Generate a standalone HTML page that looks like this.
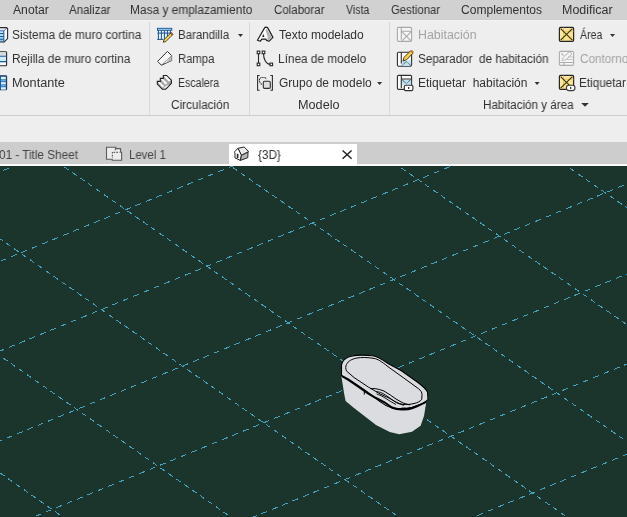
<!DOCTYPE html>
<html><head><meta charset="utf-8">
<style>
*{margin:0;padding:0;box-sizing:border-box}
html,body{width:627px;height:517px;overflow:hidden;background:#eeeeee;font-family:"Liberation Sans",sans-serif;font-size:12px;color:#323232}
.a{position:absolute}
.t{position:absolute;white-space:pre;line-height:14px;height:14px;transform-origin:0 0;will-change:transform}
#tabbar{left:0;top:0;width:627px;height:20px;background:#d1d1d1;border-bottom:1px solid #cdcdcd}
#hl{left:0;top:20px;width:627px;height:1px;background:#f3f3f3}
#panel{left:0;top:21px;width:627px;height:94px;background:#eeeeee}
#pline{left:0;top:115px;width:627px;height:1px;background:#cdcdcd}
.sep{position:absolute;top:22px;width:1px;height:93px;background:#d9d9d9}
#strip{left:0;top:142px;width:627px;height:22px;background:#cdcdcd}
#wline{left:0;top:164px;width:627px;height:2px;background:#fafafa}
#active{left:229px;top:144px;width:128px;height:22px;background:#ffffff}
#view{left:0;top:166px;width:627px;height:351px;background:#1c352c;overflow:hidden}
.g{color:#a3a3a3}
.v{color:#444}
</style></head><body>
<div class="a" id="tabbar"></div>
<div class="a" id="hl"></div>
<div class="a" id="panel"></div>
<div class="a" id="pline"></div>
<div class="sep" style="left:149px"></div>
<div class="sep" style="left:249px"></div>
<div class="sep" style="left:389px"></div>







<div class="a" id="strip"></div>
<div class="a" id="wline"></div>
<div class="a" id="active"></div>

<div id="txt">
<div class="t" style="left:13.3px;top:3px;transform:scaleX(1.014)">Anotar</div>
<div class="t" style="left:69.4px;top:3px;transform:scaleX(0.960)">Analizar</div>
<div class="t" style="left:130.3px;top:3px;transform:scaleX(0.991)">Masa y emplazamiento</div>
<div class="t" style="left:273.8px;top:3px;transform:scaleX(0.958)">Colaborar</div>
<div class="t" style="left:345.6px;top:3px;transform:scaleX(0.881)">Vista</div>
<div class="t" style="left:390.9px;top:3px;transform:scaleX(0.944)">Gestionar</div>
<div class="t" style="left:460.5px;top:3px;transform:scaleX(1.005)">Complementos</div>
<div class="t" style="left:561.9px;top:3px;transform:scaleX(1.038)">Modificar</div>
<div class="t" style="left:12.3px;top:28px;transform:scaleX(0.994)">Sistema de muro cortina</div>
<div class="t" style="left:12.3px;top:52px;transform:scaleX(0.992)">Rejilla de muro cortina</div>
<div class="t" style="left:12.2px;top:76px;transform:scaleX(1.057)">Montante</div>
<div class="t" style="left:177.8px;top:28px;transform:scaleX(0.958)">Barandilla</div>
<div class="t" style="left:177.9px;top:52px;transform:scaleX(0.942)">Rampa</div>
<div class="t" style="left:177.9px;top:76px;transform:scaleX(0.880)">Escalera</div>
<div class="t" style="left:171.3px;top:98px;transform:scaleX(0.983)">Circulación</div>
<div class="t" style="left:278.8px;top:28px;transform:scaleX(0.998)">Texto modelado</div>
<div class="t" style="left:277.8px;top:52px;transform:scaleX(0.986)">Línea de modelo</div>
<div class="t" style="left:278.8px;top:76px;transform:scaleX(0.998)">Grupo de modelo</div>
<div class="t" style="left:298.4px;top:98px;transform:scaleX(1.055)">Modelo</div>
<div class="t g" style="left:417.8px;top:28px;transform:scaleX(1.033)">Habitación</div>
<div class="t" style="left:417.8px;top:52px;transform:scaleX(0.973)">Separador  de habitación</div>
<div class="t" style="left:417.8px;top:76px;transform:scaleX(0.996)">Etiquetar  habitación</div>
<div class="t" style="left:482.9px;top:98px;transform:scaleX(0.970)">Habitación y área</div>
<div class="t" style="left:580.3px;top:28px;transform:scaleX(0.881)">Área</div>
<div class="t g" style="left:580.3px;top:52px;transform:scaleX(0.978)">Contorno</div>
<div class="t" style="left:579.3px;top:76px;transform:scaleX(0.978)">Etiquetar</div>
<div class="t v" style="left:-1.1px;top:148px;transform:scaleX(0.978)">01 - Title Sheet</div>
<div class="t v" style="left:128.7px;top:148px;transform:scaleX(0.954)">Level 1</div>
<div class="t" style="left:257.9px;top:148px;transform:scaleX(0.978)">{3D}</div>
</div>
<!--ICONS-->
<svg class="a" style="left:0;top:0" width="627" height="166" viewBox="0 0 627 166">
<defs>
<linearGradient id="bl" x1="0" y1="0" x2="0" y2="1"><stop offset="0" stop-color="#cfeaff"/><stop offset="1" stop-color="#7cc4f2"/></linearGradient>
<linearGradient id="ye" x1="0" y1="0" x2="1" y2="1"><stop offset="0" stop-color="#fcecb0"/><stop offset="1" stop-color="#f7dc80"/></linearGradient>
</defs>
<!-- Sistema de muro cortina -->
<g>
<path d="M3.8,30.5 L7.5,27.5 L7.5,38.5 L3.8,41.8 Z" fill="#fafcff"/>
<rect x="-1" y="30.5" width="4.8" height="11.5" fill="url(#bl)"/>
<path d="M-1,27.6 L6.5,27.6 L7.6,28.6 L7.6,38.6 L4.2,42 L-1,42" fill="none" stroke="#2b2b2b" stroke-width="1.1"/>
<path d="M6.8,28.2 L3.8,30.8 L-1,30.8" fill="none" stroke="#1f5d9e" stroke-width="0.9"/>
<path d="M3.8,30.8 L3.8,41.6" stroke="#1f5d9e" stroke-width="1.1"/>
<path d="M-1,33.5 H3.8 M-1,36.5 H3.8 M-1,39.3 H3.8" stroke="#1f5d9e" stroke-width="1"/>
</g>
<!-- Rejilla -->
<g>
<rect x="-1" y="51.8" width="7.6" height="14" fill="#f4f8fb" stroke="#2b2b2b" stroke-width="1.1" rx="0.8"/>
<rect x="0" y="52.5" width="6" height="3.6" fill="#d5dde4"/>
<rect x="0" y="56.8" width="6" height="4.5" fill="#c9ecff"/>
<path d="M-1,56.3 H6.2 M-1,61.6 H6.2" stroke="#1f5d9e" stroke-width="1.1"/>
</g>
<!-- Montante -->
<g>
<rect x="-1" y="75.8" width="7.6" height="14" fill="#1a5ea8" stroke="#243a55" stroke-width="1.1" rx="0.8"/>
<rect x="1" y="76.8" width="4.8" height="2.6" fill="#d8f0ff"/>
<rect x="1" y="80.3" width="4.8" height="1" fill="#8fd0f5"/>
<rect x="1" y="82.2" width="4.8" height="2.2" fill="#e3f4ff"/>
<rect x="1" y="85.3" width="4.8" height="1" fill="#8fd0f5"/>
<rect x="1" y="87.2" width="4.8" height="2.4" fill="#e3f4ff"/>
</g>
<!-- Barandilla -->
<g>
<rect x="157.5" y="30" width="14" height="9.3" fill="#e3f4ff"/>
<rect x="157.4" y="28.3" width="14.4" height="2" fill="#9ad6fb" stroke="#1d4f8c" stroke-width="0.9"/>
<path d="M158.4,30.5 V39.3 M161.4,30.5 V39.3 M164.4,30.5 V39.3 M167.4,30.5 V38 M170.4,30.5 V35" stroke="#1d4f8c" stroke-width="1"/>
<path d="M157.5,33.1 H171.5 M157.2,39.4 H163.5" stroke="#1d4f8c" stroke-width="1"/>
<path d="M163.3,42.3 L164,39.6 L170.6,33.2 L172.4,35 L165.9,41.5 Z" fill="#f3cf52" stroke="#2e2410" stroke-width="0.8" stroke-linejoin="round"/>
<path d="M170.6,33.2 L171.4,32.4 L173.2,34.2 L172.4,35 Z" fill="#d27a3c" stroke="#5a3010" stroke-width="0.6"/>
</g>
<!-- Rampa -->
<g>
<path d="M157.6,61.4 L167.4,51.4 L171.6,55.6 L171.6,60.6 L161.4,65.2 Z" fill="#fbfbfb" stroke="#2e2e2e" stroke-width="1"/>
<path d="M171.6,55.6 L171.6,60.6 L165.2,63.4 Z" fill="#b9b9b9"/>
<path d="M161.4,65.2 L171.6,55.6" stroke="#5a5a5a" stroke-width="0.6"/>
</g>
<!-- Escalera -->
<g>
<path d="M157.3,81.4 L160.3,81.4 L160.3,78.4 L163.3,78.4 L163.3,75.5 L166.6,75.5 L171.4,80.3 L171.4,83.3 L165.7,89.1 L162.4,89.1 L157.3,84 Z" fill="#a9a9a9" stroke="#1e1e1e" stroke-width="1.1" stroke-linejoin="miter"/>
<path d="M163.8,76.1 L166.4,76.1 L170.8,80.5 L168.6,81.6 Z" fill="#fdfdfd"/>
<path d="M160.8,79 L163,79 L167.3,83.3 L165.3,84.6 Z" fill="#fdfdfd"/>
<path d="M157.9,82 L160,82 L164.2,86.2 L162.2,87.4 Z" fill="#fdfdfd"/>
<path d="M162.6,88.5 L165.4,88.5 L169,85 L166.8,85.6 Z" fill="#f4f4f4"/>
<path d="M157.8,83.8 L162.3,88.4" stroke="#777" stroke-width="1"/>
</g>
<!-- Texto modelado -->
<g>
<path d="M257.4,40.2 L264.6,27.9 C265.2,26.9 267.1,26.9 267.7,27.9 L272.9,37.4 L269,41.2 L266.6,40.4 L265.8,39.2 L261.8,39.2 L260.4,41.2 Z" fill="#fbfbfb" stroke="#1e1e1e" stroke-width="1.2" stroke-linejoin="round"/>
<path d="M266.6,28.8 L272.2,37.5 L269.2,40.4 L267.2,39.6 L267.8,37 L265.6,30.5 Z" fill="#b3b3b3"/>
<path d="M262.2,37.1 L263.3,33.8 L264.4,37.1 Z" fill="#1e1e1e"/>
</g>
<!-- Linea de modelo -->
<g fill="#fff" stroke="#262626" stroke-width="1.1">
<path d="M258.5,53.2 V63.6 M263.5,53.5 C263.5,59 266,64.4 270.4,64.4" fill="none"/>
<rect x="257.2" y="51.1" width="2.6" height="2.6"/>
<rect x="257.2" y="63.1" width="2.6" height="2.6"/>
<rect x="262.2" y="51.1" width="2.6" height="2.6"/>
<rect x="270" y="63.1" width="2.6" height="2.6"/>
</g>
<!-- Grupo de modelo -->
<g fill="none" stroke="#2e2e2e" stroke-width="1.1">
<path d="M259.6,75.5 H257.6 V90.2 H259.6 M270.4,75.5 H272.4 V90.2 H270.4"/>
<path d="M261.7,84.5 L259.5,82.2 V79.2 L261.2,77.5 H265 L266.5,79" stroke-dasharray="1.2 0.6"/>
<rect x="263.3" y="81.2" width="7" height="7.2" rx="1.2" fill="#dedede"/>
</g>
<!-- Habitacion (disabled) -->
<g fill="none" stroke="#a9a9a9" stroke-width="1.1">
<rect x="397.4" y="27.4" width="14.2" height="14" rx="1.2" fill="#f5f5f5"/>
<path d="M401.3,27.4 V39.8 M401.3,31.2 H411.6"/>
<path d="M402,31.8 L411,40.8 M411,31.8 L402,40.8"/>
</g>
<!-- Separador -->
<g>
<rect x="397.4" y="52.2" width="14.2" height="14" rx="1.2" fill="#fbfbfb" stroke="#2e2e2e" stroke-width="1.1"/>
<rect x="401.8" y="60.4" width="9.3" height="5.4" fill="#bfe3f3"/>
<path d="M401.3,52.2 V63.6" stroke="#2e2e2e" stroke-width="1.1"/>
<path d="M401.6,65.6 L406.3,61.6 L411,65.6" fill="none" stroke="#2e2e2e" stroke-width="0.9" stroke-dasharray="1 0.6"/>
<path d="M403,61 L404,57.4 L410.6,50.8 L413,53.2 L406.5,59.8 Z" fill="#f4cf4a" stroke="#3a2a10" stroke-width="0.9"/>
<path d="M410.6,50.8 L411.8,49.8 L414,52 L413,53.2 Z" fill="#d9763a"/>
</g>
<!-- Etiquetar habitacion -->
<g>
<rect x="397.4" y="75.4" width="14.2" height="14" rx="1.2" fill="#fbfbfb" stroke="#2e2e2e" stroke-width="1.1"/>
<path d="M401.8,79.4 L411.1,79.4 L411.1,84.6 L404,84.6 L401.8,86 Z" fill="#bfe3f3"/>
<path d="M401.3,75.4 V88" stroke="#2e2e2e" stroke-width="1.1"/>
<path d="M401.3,79 H411.6" stroke="#2e2e2e" stroke-width="1"/>
<path d="M402,79.6 L406.3,83.6 L410.8,79.6" fill="none" stroke="#2e2e2e" stroke-width="1" stroke-dasharray="1 0.6"/>
<rect x="404.3" y="85.3" width="8.6" height="5.3" rx="1.3" fill="#fff" stroke="#2e2e2e" stroke-width="1.1"/>
<rect x="408.1" y="87" width="1.2" height="2" fill="#2e2e2e"/>
</g>
<!-- Area -->
<g>
<rect x="559.4" y="27.4" width="14.2" height="14" rx="1.2" fill="url(#ye)" stroke="#262626" stroke-width="1.2"/>
<path d="M563.5,27.6 V39.8 M563.5,31.2 H573.4" stroke="#e8c656" stroke-width="1"/>
<path d="M560.6,28.6 L572.4,40.2 M572.4,28.6 L560.6,40.2" stroke="#3a3000" stroke-width="1.1"/>
</g>
<!-- Contorno (disabled) -->
<g fill="none" stroke="#adadad" stroke-width="1.1">
<rect x="559.4" y="51.4" width="14.2" height="14" rx="1.2" fill="#f5f5f5"/>
<path d="M559.4,62.5 H573.6 M564,62.5 V65.4 M561.5,53.5 L563.5,55.5"/>
<path d="M562.2,60.4 L563,57.6 L569.4,51.6 L571.8,54 L565.4,60 Z" stroke-dasharray="0.9 0.5"/>
<path d="M566.5,59.5 H572.5 M568,57 H573" stroke-width="0.7"/>
</g>
<!-- Etiquetar area -->
<g>
<rect x="559.4" y="75.4" width="14.2" height="14" rx="1.2" fill="url(#ye)" stroke="#262626" stroke-width="1.2"/>
<path d="M563.5,75.6 V87.8 M563.5,79.2 H573.4" stroke="#e8c656" stroke-width="1"/>
<path d="M560.6,76.6 L572.4,88.2 M572.4,76.6 L560.6,88.2" stroke="#3a3000" stroke-width="1.1"/>
<rect x="566.4" y="85.3" width="8.6" height="5.3" rx="2.6" fill="#fff" stroke="#3a3a3a" stroke-width="1.1"/>
<rect x="570.1" y="86.8" width="1.2" height="2.3" fill="#2e2e2e"/>
</g>
<!-- arrows -->
<g fill="#333">
<path d="M238,34 H243 L240.5,37 Z"/>
<path d="M377.1,82 H382.1 L379.6,85 Z"/>
<path d="M534.6,82 H539.6 L537.1,85 Z"/>
<path d="M610,34 H615 L612.5,37 Z"/>
<path d="M581.2,103.1 H588.8 L585,106.8 Z"/>
</g>
<!-- Level 1 icon -->
<g>
<path d="M106.5,147.2 H115.8 V148.6 H120.6 V152.2 H121.6 V160.3 H112.2 V159.2 H106.5 Z" fill="#ececec" stroke="#5c5c5c" stroke-width="1.1"/>
<path d="M112.4,152 V158 M113.5,152.4 H119.5 M115.4,148.6 V150.8" stroke="#5c5c5c" stroke-width="1.1" stroke-dasharray="1.6 1.2"/>
</g>
<!-- 3D house -->
<g stroke="#262626" stroke-width="1" stroke-linejoin="round">
<path d="M238,148.3 L244.2,147 L248.7,151.7 L241.4,155.3 Z" fill="#ececec"/>
<path d="M234.2,152.1 L238,148.3 L241.4,155.3 L240.4,160.4 L235,157.9 L235,152.8 Z" fill="#fdfdfd"/>
<path d="M241.4,155.3 L248,152.1 L247.8,157.7 L240.4,160.4 Z" fill="#b5b5b5"/>
</g>
<rect x="236.8" y="153.8" width="1.6" height="4.3" fill="#262626"/>
<!-- close X -->
<path d="M342.6,150.4 L351.6,158.8 M351.6,150.4 L342.6,158.8" stroke="#1e1e1e" stroke-width="1.4"/>
</svg>
<!--/ICONS-->
<div class="a" id="view"></div>
<!--GRID-->
<svg class="a" style="left:0;top:166px" width="627" height="351" viewBox="0 0 627 351" shape-rendering="crispEdges">
<style>.ld,.lu{stroke:#45a1be;stroke-width:1;fill:none}.ld{stroke-dasharray:5.3 4.3}.lu{stroke-dasharray:6.1 5.1}</style>
<line class="ld" x1="-853.4" y1="176.9" x2="34.7" y2="802.1"/>
<line class="ld" x1="-748.2" y1="133.8" x2="140.8" y2="758.7"/>
<line class="ld" x1="-643.0" y1="90.6" x2="246.9" y2="715.2"/>
<line class="ld" x1="-537.8" y1="47.5" x2="353.1" y2="671.8"/>
<line class="ld" x1="-432.5" y1="4.3" x2="459.2" y2="628.3"/>
<line class="ld" x1="-327.3" y1="-38.9" x2="565.4" y2="584.8"/>
<line class="ld" x1="-222.0" y1="-82.1" x2="671.5" y2="541.4"/>
<line class="ld" x1="-116.7" y1="-125.2" x2="777.7" y2="497.9"/>
<line class="ld" x1="-11.4" y1="-168.4" x2="883.9" y2="454.4"/>
<line class="ld" x1="93.9" y1="-211.6" x2="990.1" y2="410.9"/>
<line class="ld" x1="199.3" y1="-254.8" x2="1096.4" y2="367.4"/>
<line class="ld" x1="304.6" y1="-298.0" x2="1202.6" y2="323.9"/>
<line class="ld" x1="410.0" y1="-341.3" x2="1308.9" y2="280.4"/>
<line class="lu" x1="-748.2" y1="133.8" x2="410.0" y2="-341.3"/>
<line class="lu" x1="-668.0" y1="190.2" x2="491.1" y2="-285.2"/>
<line class="lu" x1="-587.6" y1="246.7" x2="572.4" y2="-229.0"/>
<line class="lu" x1="-507.1" y1="303.2" x2="653.8" y2="-172.7"/>
<line class="lu" x1="-426.5" y1="359.9" x2="735.2" y2="-116.3"/>
<line class="lu" x1="-345.8" y1="416.6" x2="816.8" y2="-59.9"/>
<line class="lu" x1="-265.0" y1="473.4" x2="898.6" y2="-3.4"/>
<line class="lu" x1="-184.1" y1="530.3" x2="980.4" y2="53.2"/>
<line class="lu" x1="-103.0" y1="587.3" x2="1062.3" y2="109.9"/>
<line class="lu" x1="-21.8" y1="644.3" x2="1144.4" y2="166.6"/>
<line class="lu" x1="59.4" y1="701.4" x2="1226.6" y2="223.5"/>
</svg>
<!--/GRID-->
<!--TUB-->
<svg class="a" style="left:0;top:0" width="627" height="517" viewBox="0 0 627 517">
<g fill="#dbdce0" stroke="none">
<path d="M341.2,375 L342.8,385 L344,393 L345.6,401 L354,408 L376,425 L389.7,432 L399.3,434.2 L412,431.8 L420.6,425.8 L424,416 L426.4,401.6 L428,393 L420,385 L360,360 Z"/>
</g>
<path fill="#dbdce0" stroke="#000" stroke-width="1.1" d="M341.5,375.5 L341.5,365 C342,361 346,357.5 351,356.2 C355,355.3 366,355 372.5,355.7 C377,356.3 381,358.5 388,363.5 L401,370.5 L415.5,380.7 C421,384.5 425.5,388 427.5,392 L428,399.5 C426,401.8 419,405 412,407.3 C407,408.6 398,409 392.6,408.3 C387,406.5 383,404 380,401.6 L366,391 L358,385.5 L348.4,379 Z"/>
<path fill="none" stroke="#000" stroke-width="1" d="M354,377.5 L346.5,371 C345.5,369 345.5,366 346.5,364.5 C348,361 352,359 357,358 C361,357.3 368,357.3 374,358.4 C378,359.3 381,361 388,366.7 L401,376 L418.5,388.7 C421,390.7 422,392.5 422,394.5 L421.7,399.5 C420,401.5 417,403 414,403.5 C410,404.5 406,404.7 403,404.5 C398,403.5 394,401 390,398.5 L380,393.9 L368.3,387 Z"/>
<path fill="none" stroke="#000" stroke-width="2" d="M341.8,376 L348.4,380 L358,386.5 L368,393.3 L376,398 L384,402 L392,407.5 C397,409.8 407,410 412,408.3 C418,406 423,404 426.5,401.5"/>
<path fill="none" stroke="#000" stroke-width="1" d="M370.4,388.6 C373,388.3 378,388.6 384,391 L390.3,395 L396,399 L403,403 L410,405"/>
<path fill="none" stroke="#000" stroke-width="0.9" d="M376,391.7 C379,391.5 382,392.8 385.5,395 L392,399.7 L397.5,403.3 L404,405.3"/>
<path fill="none" stroke="#000" stroke-width="0.9" d="M376.7,394 C379,394.8 381,395.5 384,397.3 L390.3,401.3 L396,404.5"/>
<path fill="none" stroke="#000" stroke-width="1" d="M364.3,391 L364.3,394.6"/>
<path fill="none" stroke="#000" stroke-width="1" d="M399,409.5 C401,407.5 406,407.5 408,409.5"/>
</svg>
<!--/TUB-->
</body></html>
